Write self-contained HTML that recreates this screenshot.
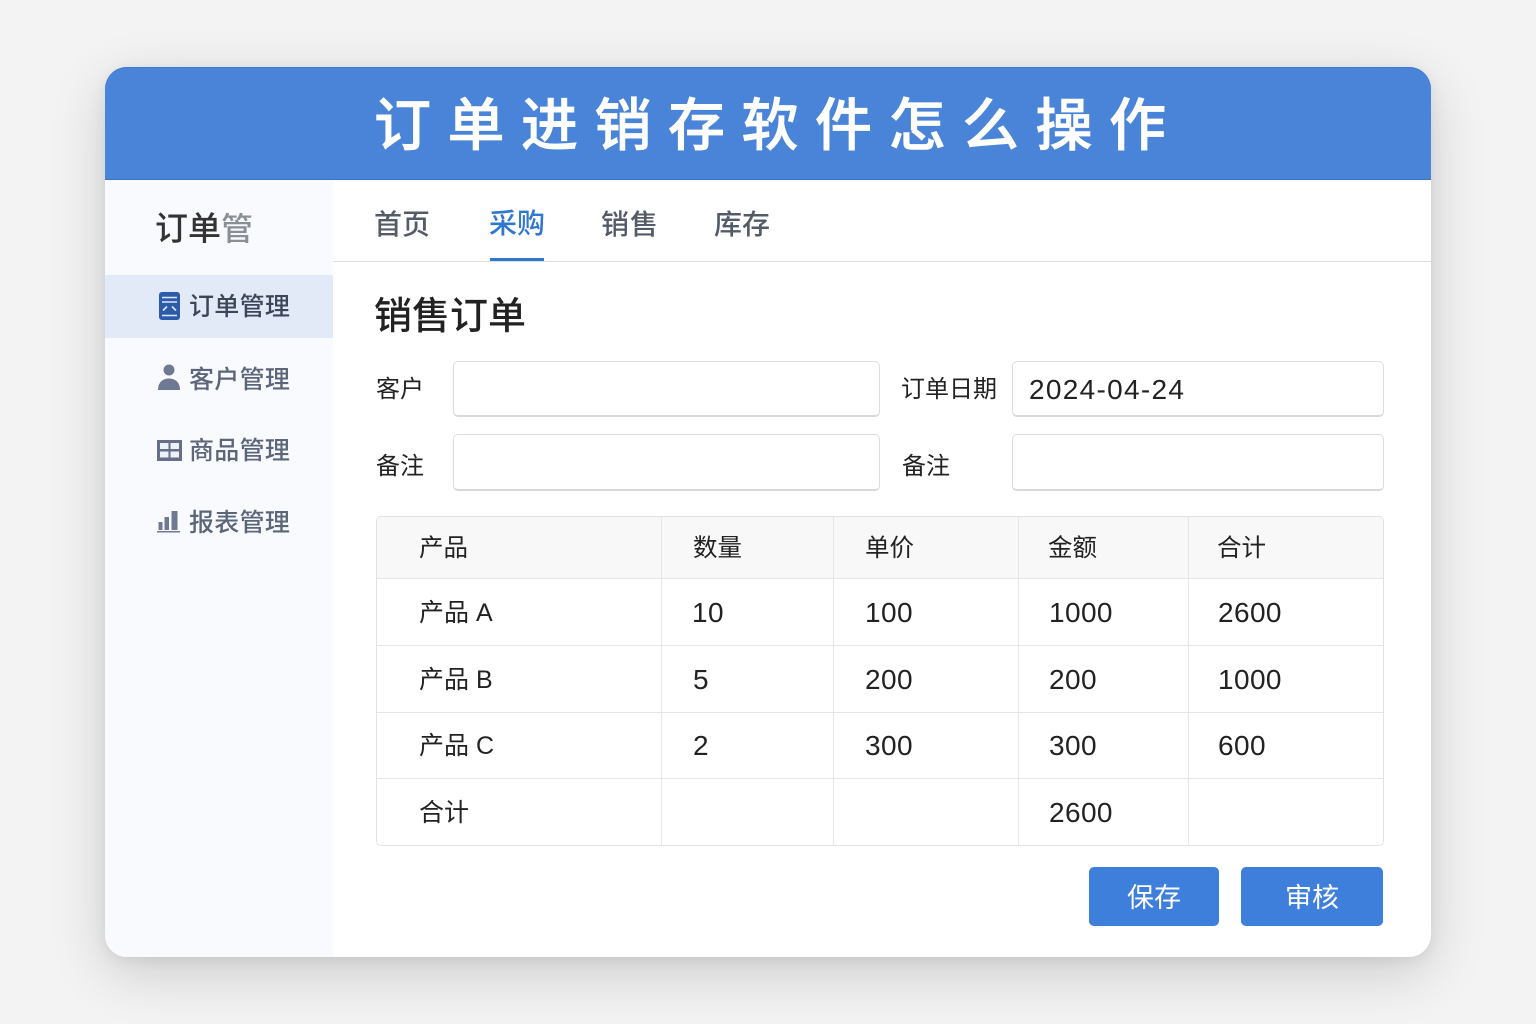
<!DOCTYPE html>
<html lang="zh">
<head>
<meta charset="utf-8">
<title>订单进销存软件怎么操作</title>
<style>
html,body{margin:0;padding:0;width:1536px;height:1024px;overflow:hidden;background:#f3f3f4}
body{position:relative;font-family:"Liberation Sans","Noto Sans CJK SC",sans-serif;color:#222}
.a{position:absolute;white-space:nowrap;line-height:1}
.card{position:absolute;left:105px;top:67px;width:1326px;height:890px;border-radius:22px;background:#fff;box-shadow:0 16px 56px rgba(0,0,0,.16),0 3px 14px rgba(0,0,0,.07)}
.head{position:absolute;left:105px;top:67px;width:1326px;height:113px;background:#4a84d8;border-radius:22px 22px 0 0;box-shadow:inset 0 -1px 0 #3a74c8,inset 0 1px 0 #3f7ad0}
.side{position:absolute;left:105px;top:180px;width:228px;height:777px;background:#f8fafd;border-radius:0 0 0 22px}
.active{position:absolute;left:105px;top:275px;width:228px;height:63px;background:#e2e9f7}
.nav{font-size:25px;color:#5c6579;font-weight:500;letter-spacing:.3px}
.tab{font-size:28px;color:#535b68;font-weight:500}
.inp{position:absolute;box-sizing:border-box;background:#fff;border:1px solid #dcdcdc;border-bottom:2px solid #d9d9d9;border-radius:5px}
.lab{font-size:24px;color:#222}
.cell{font-size:25px;color:#222}
.num{font-size:28px;letter-spacing:.4px;color:#222}
.th{font-size:24.500px;color:#222}
.line{position:absolute;background:#e6e6e6}
.btn{position:absolute;top:867px;height:59px;background:#3f7fdc;border-radius:5px;color:#fff;font-size:27px;line-height:62px;text-align:center}
</style>
</head>
<body>
<div class="card"></div>
<div class="head"></div>
<div class="a" style="left:374px;top:98px;font-size:57px;font-weight:500;color:#fff;letter-spacing:16.500px;-webkit-text-stroke:.7px #fff;">订单进销存软件怎么操作</div>

<div class="side"></div>
<div class="a" style="left:155px;top:212px;font-size:33px;color:#333;font-weight:500;">订单<span style="color:#8a8f96;font-size:32px;">管</span></div>
<div class="active"></div>

<svg class="a" style="left:158px;top:291px" width="23" height="30" viewBox="0 0 23 30">
<rect x="1" y="1" width="21" height="28" rx="3" fill="#2d5bab"/>
<path d="M4 6.500H19M4 11H19M4 24.500H19M5 19.500L9 15.500M18 19.500L14 15.500" stroke="#dfe8f7" stroke-width="1.600" fill="none"/>
</svg>
<div class="a nav" style="left:189px;top:295px;color:#3c4658;">订单管理</div>

<svg class="a" style="left:157px;top:364px" width="24" height="27" viewBox="0 0 24 27">
<circle cx="12" cy="6" r="5.500" fill="#6f7993"/>
<path d="M1 26C1 18 6 14.500 12 14.500S23 18 23 26Z" fill="#6f7993"/>
</svg>
<div class="a nav" style="left:189px;top:368px;">客户管理</div>

<svg class="a" style="left:157px;top:440px" width="25" height="21" viewBox="0 0 25 21">
<rect x="0" y="0" width="25" height="21" fill="#666f87"/>
<rect x="3" y="3" width="8.500" height="6" fill="#eef1f7"/>
<rect x="13.500" y="3" width="8.500" height="6" fill="#eef1f7"/>
<rect x="3" y="11.500" width="8.500" height="6" fill="#eef1f7"/>
<rect x="13.500" y="11.500" width="8.500" height="6" fill="#eef1f7"/>
</svg>
<div class="a nav" style="left:189px;top:439px;">商品管理</div>

<svg class="a" style="left:157px;top:510px" width="24" height="23" viewBox="0 0 24 23">
<rect x="1.500" y="12" width="4" height="8" fill="#6f7993"/>
<rect x="7.500" y="7" width="4.500" height="13" fill="#6f7993"/>
<rect x="14.500" y="1" width="6" height="19" fill="#6f7993"/>
<rect x="0" y="21" width="23" height="1.500" fill="#6f7993"/>
</svg>
<div class="a nav" style="left:189px;top:511px;">报表管理</div>

<div class="a tab" style="left:374px;top:211px;">首页</div>
<div class="a tab" style="left:489px;top:210px;color:#2f77d0;">采购</div>
<div class="a tab" style="left:601px;top:211px;letter-spacing:1px;">销售</div>
<div class="a tab" style="left:714px;top:211px;">库存</div>
<div class="a" style="left:333px;top:261px;width:1098px;height:1px;background:#dedede;"></div>
<div class="a" style="left:490px;top:258px;width:54px;height:3px;background:#2f77d0;"></div>

<div class="a" style="left:374px;top:298px;font-size:38px;font-weight:500;color:#222;">销售订单</div>

<div class="a lab" style="left:376px;top:378px;">客户</div>
<div class="inp" style="left:453px;top:361px;width:427px;height:56px;"></div>
<div class="a lab" style="left:901px;top:378px;">订单日期</div>
<div class="inp" style="left:1012px;top:361px;width:372px;height:56px;"></div>
<div class="a" style="left:1029px;top:376px;font-size:28px;color:#222;letter-spacing:1.300px;">2024-04-24</div>
<div class="a lab" style="left:376px;top:455px;">备注</div>
<div class="inp" style="left:453px;top:434px;width:427px;height:57px;"></div>
<div class="a lab" style="left:902px;top:455px;">备注</div>
<div class="inp" style="left:1012px;top:434px;width:372px;height:57px;"></div>

<div class="a" style="left:376px;top:516px;width:1008px;height:330px;box-sizing:border-box;border:1px solid #e2e2e2;border-radius:5px;"></div>
<div class="a" style="left:377px;top:517px;width:1006px;height:61px;background:#f8f8f8;border-radius:4px 4px 0 0;"></div>
<div class="line" style="left:377px;top:578px;width:1006px;height:1px;"></div>
<div class="line" style="left:377px;top:645px;width:1006px;height:1px;"></div>
<div class="line" style="left:377px;top:712px;width:1006px;height:1px;"></div>
<div class="line" style="left:377px;top:778px;width:1006px;height:1px;"></div>
<div class="line" style="left:661px;top:517px;width:1px;height:328px;"></div>
<div class="line" style="left:833px;top:517px;width:1px;height:328px;"></div>
<div class="line" style="left:1018px;top:517px;width:1px;height:328px;"></div>
<div class="line" style="left:1188px;top:517px;width:1px;height:328px;"></div>

<div class="a th" style="left:419px;top:537px;">产品</div>
<div class="a th" style="left:693px;top:537px;">数量</div>
<div class="a th" style="left:865px;top:537px;">单价</div>
<div class="a th" style="left:1048px;top:537px;">金额</div>
<div class="a th" style="left:1217px;top:537px;">合计</div>

<div class="a cell" style="left:419px;top:601px;">产品 A</div>
<div class="a num" style="left:692px;top:599px;">10</div>
<div class="a num" style="left:865px;top:599px;">100</div>
<div class="a num" style="left:1049px;top:599px;">1000</div>
<div class="a num" style="left:1218px;top:599px;">2600</div>

<div class="a cell" style="left:419px;top:668px;">产品 B</div>
<div class="a num" style="left:693px;top:666px;">5</div>
<div class="a num" style="left:865px;top:666px;">200</div>
<div class="a num" style="left:1049px;top:666px;">200</div>
<div class="a num" style="left:1218px;top:666px;">1000</div>

<div class="a cell" style="left:419px;top:734px;">产品 C</div>
<div class="a num" style="left:693px;top:732px;">2</div>
<div class="a num" style="left:865px;top:732px;">300</div>
<div class="a num" style="left:1049px;top:732px;">300</div>
<div class="a num" style="left:1218px;top:732px;">600</div>

<div class="a cell" style="left:419px;top:801px;">合计</div>
<div class="a num" style="left:1049px;top:799px;">2600</div>

<div class="btn" style="left:1089px;width:130px;">保存</div>
<div class="btn" style="left:1241px;width:142px;">审核</div>
</body>
</html>
